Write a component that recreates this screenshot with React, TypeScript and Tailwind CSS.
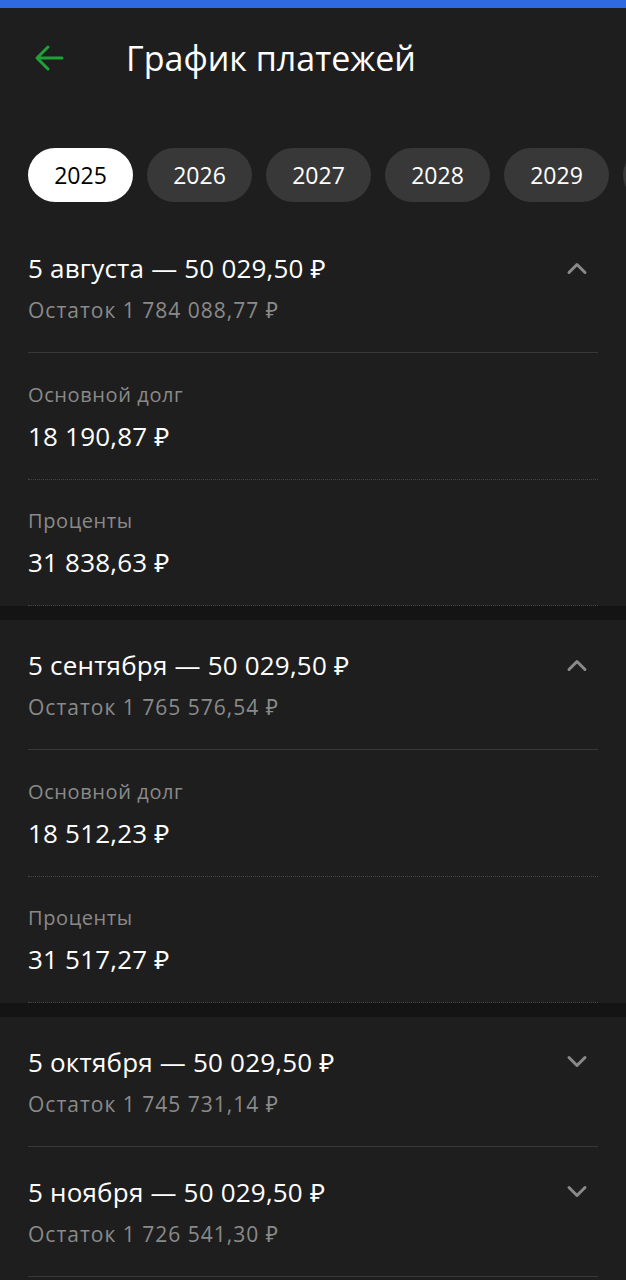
type Payment = {
  date: string;
  total: string;
  rest: string;
  principal?: string;
  interest?: string;
};

const years = ["2025", "2026", "2027", "2028", "2029"];

const payments: Payment[] = [
  {
    date: "5 августа",
    total: "50 029,50 ₽",
    rest: "Остаток 1 784 088,77 ₽",
    principal: "18 190,87 ₽",
    interest: "31 838,63 ₽",
  },
  {
    date: "5 сентября",
    total: "50 029,50 ₽",
    rest: "Остаток 1 765 576,54 ₽",
    principal: "18 512,23 ₽",
    interest: "31 517,27 ₽",
  },
  { date: "5 октября", total: "50 029,50 ₽", rest: "Остаток 1 745 731,14 ₽" },
  { date: "5 ноября", total: "50 029,50 ₽", rest: "Остаток 1 726 541,30 ₽" },
];

function Chevron({ up }: { up: boolean }) {
  return (
    <svg width="22" height="14" viewBox="0 0 22 14" fill="none" className="mt-[9px] mr-[10px] shrink-0">
      <path
        d={up ? "M3 11.5L11 3.5L19 11.5" : "M3 2.5L11 10.5L19 2.5"}
        stroke="#8a8a8a"
        strokeWidth="3"
        strokeLinecap="round"
        strokeLinejoin="round"
      />
    </svg>
  );
}

function Header({ p, open }: { p: Payment; open: boolean }) {
  return (
    <div className="flex items-start justify-between pt-[29px] pb-[28px] border-b border-[#383838]">
      <div>
        <div className="text-[26px] leading-8 tracking-[0.2px] text-white">
          {p.date} — {p.total}
        </div>
        <div className="mt-[12px] text-[21px] leading-7 tracking-[1px] text-[#8a8a8a]">{p.rest}</div>
      </div>
      <Chevron up={open} />
    </div>
  );
}

function Detail({ label, value, first }: { label: string; value: string; first?: boolean }) {
  return (
    <div className={first ? "pt-[29px] pb-[27px] border-b border-dotted border-[#454545]" : "pt-[28px] pb-[27px] border-b border-dotted border-[#454545]"}>
      <div className="text-[20px] leading-[26px] tracking-[0.6px] text-[#8a8a8a]">{label}</div>
      <div className="mt-[12px] text-[26px] leading-8 tracking-[0.2px] text-white">{value}</div>
    </div>
  );
}

export default function App() {
  return (
    <div
      className="min-h-[1280px] w-[626px] overflow-hidden bg-[#1e1e1e]"
      style={{ fontFamily: "'Open Sans', 'Noto Sans', sans-serif" }}
    >
      <div className="h-2 bg-[#2e6be3]" />
      <div className="flex h-[100px] items-center px-[34px]">
        <svg width="30" height="28" viewBox="0 0 30 28" fill="none" className="shrink-0">
          <path d="M28 14H3.5M14 3L3 14L14 25" stroke="#21a038" strokeWidth="3" strokeLinecap="round" strokeLinejoin="round" />
        </svg>
        <h1 className="ml-[62px] text-[34px] font-normal text-white">График платежей</h1>
      </div>

      <div className="flex gap-[14px] overflow-hidden pl-7 pt-10 pb-[21px]">
        {years.map((y, i) => (
          <div
            key={y}
            className={
              i === 0
                ? "flex h-[54px] w-[105px] shrink-0 items-center justify-center rounded-full bg-white text-[23px] text-black"
                : "flex h-[54px] w-[105px] shrink-0 items-center justify-center rounded-full bg-[#383838] text-[23px] text-white"
            }
          >
            {y}
          </div>
        ))}
        <div className="h-[54px] w-[105px] shrink-0 rounded-full bg-[#383838]" />
      </div>

      {payments.map((p) => {
        const open = !!p.principal;
        return (
          <div key={p.date}>
            <div className="px-7">
              <Header p={p} open={open} />
              {open && (
                <>
                  <Detail label="Основной долг" value={p.principal!} first />
                  <Detail label="Проценты" value={p.interest!} />
                </>
              )}
            </div>
            {open && <div className="h-[14px] bg-[#141414]" />}
          </div>
        );
      })}
    </div>
  );
}
